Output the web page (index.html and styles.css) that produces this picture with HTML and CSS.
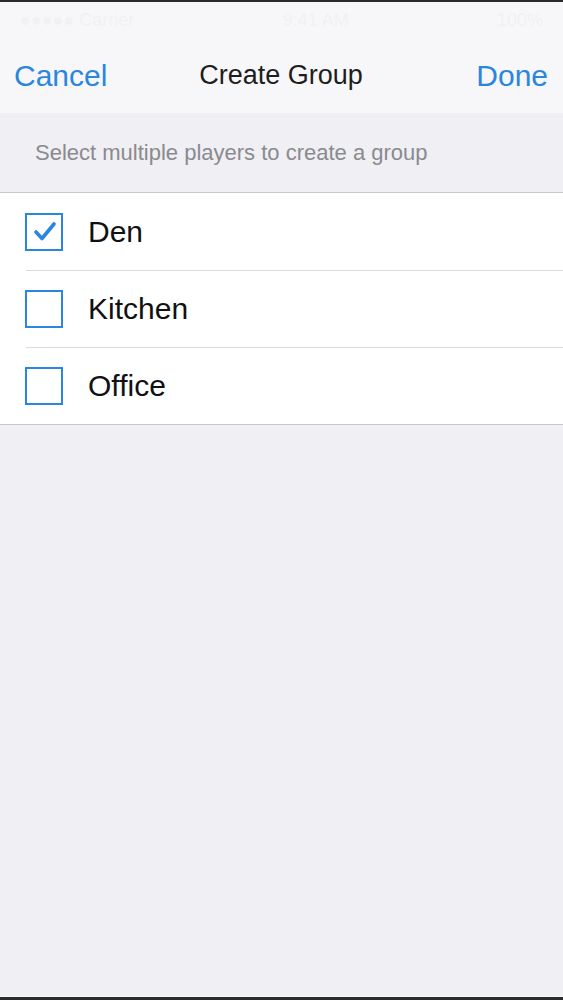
FILE: index.html
```html
<!DOCTYPE html>
<html lang="en">
<head>
    <meta charset="UTF-8">
    <meta name="viewport" content="width=device-width, initial-scale=1.0">
    <title>Create Group</title>
    <link rel="stylesheet" href="styles.css">
</head>
<body>
    <div class="screen">
        <div class="edge-top"></div>
        <div class="nav">
            <div class="status">
                <span>●●●●● Carrier</span>
                <span>9:41 AM</span>
                <span>100%</span>
            </div>
            <div class="navbar">
                <a class="nav-btn left">Cancel</a>
                <h1 class="nav-title">Create Group</h1>
                <a class="nav-btn right">Done</a>
            </div>
        </div>

        <div class="hint">Select multiple players to create a group</div>

        <ul class="list">
            <li class="row">
                <span class="check checked">
                    <svg viewBox="0 0 38 38" width="38" height="38">
                        <path d="M11 19 L17 25.5 L29 11" fill="none" stroke="#2a86de" stroke-width="3.6" stroke-linecap="round" stroke-linejoin="round"/>
                    </svg>
                </span>
                <span class="label">Den</span>
            </li>
            <li class="row">
                <span class="check"></span>
                <span class="label">Kitchen</span>
            </li>
            <li class="row">
                <span class="check"></span>
                <span class="label">Office</span>
            </li>
        </ul>

        <div class="fill"></div>
        <div class="edge-bottom"></div>
    </div>
</body>
</html>
```

FILE: styles.css
```css
body {
    margin: 0;
    font-family: "Liberation Sans", Arial, sans-serif;
    background-color: #efeff4;
}

.screen {
    display: flex;
    flex-direction: column;
    height: 1000px;
}

.edge-top {
    height: 2px;
    background-color: #2a2a2c;
}

.nav {
    background-color: #f7f7f9;
}

.status {
    height: 36px;
    display: flex;
    justify-content: space-between;
    align-items: center;
    padding: 0 20px;
    font-size: 18px;
    color: #f1f1f4;
}

.navbar {
    height: 75px;
    display: grid;
    grid-template-columns: 1fr auto 1fr;
    align-items: center;
    padding: 0 15px 0 14px;
}

.nav-btn {
    font-size: 30px;
    color: #2a86de;
}

.nav-btn.right {
    justify-self: end;
}

.nav-title {
    margin: 0;
    font-size: 27px;
    font-weight: normal;
    color: #1e1e1e;
}

.hint {
    height: 79px;
    display: flex;
    align-items: center;
    padding-left: 35px;
    font-size: 22px;
    color: #8a8a8f;
    border-bottom: 1px solid #c8c7cc;
}

.list {
    list-style: none;
    margin: 0;
    padding: 0;
    background-color: #fff;
    border-bottom: 1px solid #c8c7cc;
}

.row {
    height: 77px;
    display: flex;
    align-items: center;
    padding-left: 25px;
    position: relative;
}

.row + .row::before {
    content: "";
    position: absolute;
    top: 0;
    left: 26px;
    right: 0;
    height: 1px;
    background-color: #dcdce0;
}

.check {
    width: 34px;
    height: 34px;
    border: 2px solid #2a86de;
    position: relative;
    flex: none;
}

.check svg {
    position: absolute;
    left: -2px;
    top: -2px;
}

.label {
    margin-left: 25px;
    font-size: 30px;
    color: #111;
}

.fill {
    flex: 1;
}

.edge-bottom {
    height: 3px;
    border-top: 1px solid #f8f8fa;
    background-color: #2a2a2c;
}
```
